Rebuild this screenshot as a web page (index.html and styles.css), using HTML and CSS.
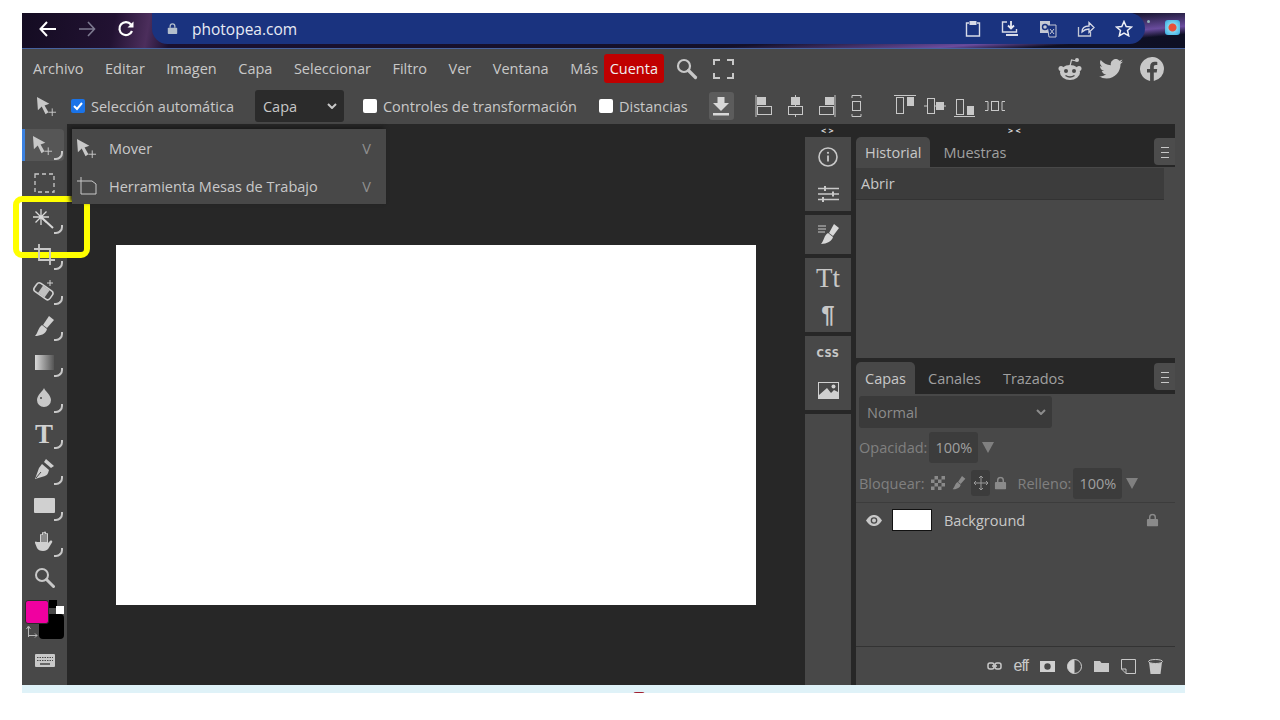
FILE: index.html
```html
<!DOCTYPE html>
<html lang="es">
<head>
    <meta charset="UTF-8">
    <title>Photopea</title>
    <link rel="stylesheet" href="styles.css">
</head>
<body>
<svg class="defs" width="0" height="0">
    <symbol id="i-move" viewBox="0 0 22 22"><path d="M1 1l13 7-5 2 4 7-3 2-4-8-4 4z" fill="currentColor"/><path d="M13 17h8M17 13v8" stroke="currentColor" fill="none"/></symbol>
    <symbol id="i-lock" viewBox="0 0 14 14"><rect x="1" y="6" width="12" height="8" rx="1" fill="currentColor"/><path d="M4 6V4a3 3 0 0 1 6 0v2" stroke="currentColor" stroke-width="1.6" fill="none"/></symbol>
    <symbol id="i-tri" viewBox="0 0 12 12"><path d="M0 1h12L6 12z" fill="currentColor"/></symbol>
    <symbol id="i-chev" viewBox="0 0 10 6"><path d="M1 1l4 4 4-4" stroke="currentColor" stroke-width="2" fill="none"/></symbol>
</svg>

<div class="window">
    <!-- barra del navegador -->
    <div class="browser">
        <div class="nav">
            <svg class="nav-back" width="18" height="16" viewBox="0 0 18 16"><path d="M17 8H2M8 1L1.500 8 8 15" stroke="#fff" stroke-width="2" fill="none"/></svg>
            <svg class="nav-fwd" width="18" height="16" viewBox="0 0 18 16"><path d="M1 8h15M10 1l6.500 7-6.500 7" stroke="#7d7a90" stroke-width="1.600" fill="none"/></svg>
            <svg class="nav-reload" width="18" height="18" viewBox="0 0 18 18"><path d="M15 11a6.500 6.500 0 1 1-1-6.500" stroke="#fff" stroke-width="2.200" fill="none"/><path d="M16.500 1.500v6h-6z" fill="#fff"/></svg>
        </div>
        <div class="omnibox">
            <svg class="lock" width="11" height="13" viewBox="0 0 14 14"><use href="#i-lock"/></svg>
            <span class="url">photopea.com</span>
            <div class="omni-icons">
                <svg width="16" height="17" viewBox="0 0 16 17"><path d="M4 3H1.500v13h13V3H12" stroke="#d8dbe8" stroke-width="1.400" fill="none"/><rect x="4.500" y="1" width="7" height="4" fill="#d8dbe8"/></svg>
                <svg width="18" height="18" viewBox="0 0 18 18"><path d="M6 2H1.500v10h14V9" stroke="#d8dbe8" stroke-width="1.400" fill="none"/><path d="M10 1v7M7 5.500L10 8.500l3-3" stroke="#e8eaf2" stroke-width="1.800" fill="none"/><path d="M5 14h12v2H5z" fill="#d8dbe8"/></svg>
                <svg width="18" height="18" viewBox="0 0 18 18"><rect x="1" y="1" width="10" height="12" fill="#c4c8d4"/><path d="M8 5h9v12H10z" fill="#1a337f" stroke="#c4c8d4"/><circle cx="6" cy="7" r="2.500" fill="none" stroke="#1a337f" stroke-width="1.400"/><path d="M11 9l4 5M15 9l-4 5" stroke="#c4c8d4"/></svg>
                <svg width="18" height="17" viewBox="0 0 18 17"><path d="M1.500 7v9h12v-4" stroke="#c4c8d4" stroke-width="1.300" fill="none"/><path d="M5 12c0-4 3-6 7-6V2.500l5 5-5 5V9c-3 0-5 1-7 3z" stroke="#d8dbe8" stroke-width="1.300" fill="none"/></svg>
                <svg width="18" height="17" viewBox="0 0 18 17"><path d="M9 1.500l2.200 5 5.300.5-4 3.500 1.200 5.300L9 13l-4.700 2.800 1.200-5.300-4-3.500 5.300-.5z" stroke="#eef0f6" stroke-width="1.500" fill="none"/></svg>
            </div>
        </div>
        <div class="ext">
            <span class="ext-dot"></span>
            <span class="ext-rec"></span>
        </div>
    </div>

    <!-- menu -->
    <div class="menubar">
        <a class="menu">Archivo</a>
        <a class="menu">Editar</a>
        <a class="menu">Imagen</a>
        <a class="menu">Capa</a>
        <a class="menu">Seleccionar</a>
        <a class="menu">Filtro</a>
        <a class="menu">Ver</a>
        <a class="menu">Ventana</a>
        <a class="menu">Más</a>
        <a class="menu account">Cuenta</a>
        <svg class="menu-search" width="22" height="22" viewBox="0 0 22 22"><circle cx="8" cy="8" r="6" stroke="#c8c8c8" stroke-width="2.200" fill="none"/><path d="M12.500 12.500l7 7" stroke="#c8c8c8" stroke-width="3.200" stroke-linecap="round"/></svg>
        <svg class="menu-full" width="21" height="20" viewBox="0 0 21 20"><path d="M1 6V1h6M14 1h6v5M20 14v5h-6M7 19H1v-5" stroke="#c8c8c8" stroke-width="2" fill="none"/></svg>
        <div class="social">
            <svg width="24" height="24" viewBox="0 0 24 24"><ellipse cx="12" cy="15.500" rx="10" ry="7.500" fill="#c8c8c8"/><circle cx="3" cy="11.500" r="2.500" fill="#c8c8c8"/><circle cx="21" cy="11.500" r="2.500" fill="#c8c8c8"/><circle cx="19" cy="3" r="2" fill="#c8c8c8"/><path d="M12 9l1.500-6 5 1" stroke="#c8c8c8" stroke-width="1.200" fill="none"/><circle cx="8" cy="14" r="2" fill="#484848"/><circle cx="16" cy="14" r="2" fill="#484848"/><path d="M7.500 18.500c3 2 6 2 9 0" stroke="#484848" stroke-width="1.300" fill="none"/></svg>
            <svg width="24" height="20" viewBox="0 0 24 20"><path d="M24 2.400c-.9.400-1.800.7-2.800.8 1-.6 1.800-1.600 2.200-2.700-1 .6-2 1-3.100 1.200A4.900 4.900 0 0 0 11.900 6.200C7.800 6 4.200 4 1.700.9c-1.300 2.200-.7 5.100 1.500 6.600-.8 0-1.600-.2-2.200-.6 0 2.400 1.700 4.400 3.900 4.900-.7.200-1.500.2-2.200.1.600 2 2.400 3.400 4.600 3.400A9.900 9.900 0 0 1 0 17.300 14 14 0 0 0 7.500 19.500c9.100 0 14.300-7.700 14-14.600 1-.7 1.800-1.500 2.500-2.500z" fill="#c8c8c8"/></svg>
            <svg width="24" height="24" viewBox="0 0 24 24"><path d="M24 12a12 12 0 1 0-13.900 11.900v-8.400H7V12h3.100V9.400c0-3 1.800-4.700 4.500-4.700 1.300 0 2.700.2 2.700.2v3h-1.500c-1.500 0-2 .9-2 1.900V12h3.400l-.5 3.500h-2.900v8.400A12 12 0 0 0 24 12z" fill="#c8c8c8"/></svg>
        </div>
    </div>

    <!-- opciones de la herramienta -->
    <div class="options">
        <svg class="opt-move" width="21" height="21"><use href="#i-move"/></svg>
        <span class="check checked"><svg width="14" height="14" viewBox="0 0 14 14"><path d="M3 7l3 3 5-6" stroke="#fff" stroke-width="2" fill="none"/></svg></span>
        <span class="opt-label">Selección automática</span>
        <div class="opt-select">Capa <svg width="10" height="6"><use href="#i-chev"/></svg></div>
        <span class="check check-a"></span>
        <span class="opt-label">Controles de transformación</span>
        <span class="check check-b"></span>
        <span class="opt-label">Distancias</span>
        <div class="opt-download"><svg width="18" height="20" viewBox="0 0 18 20"><path d="M5.500 1h7v6H17l-8 8-8-8h4.500z" fill="#d8d8d8"/><rect x="1" y="17" width="16" height="2.500" fill="#d8d8d8"/></svg></div>
        <svg class="align a1" width="17" height="24" viewBox="0 0 17 24"><path d="M1 1v22" stroke="#c8c8c8"/><rect x="2" y="3" width="9" height="8" fill="#c8c8c8"/><rect x="2.500" y="12.500" width="14" height="8" stroke="#c8c8c8" fill="none"/></svg>
        <svg class="align a2" width="17" height="24" viewBox="0 0 17 24"><path d="M8.500 1v3M8.500 11v2M8.500 20v3" stroke="#c8c8c8"/><rect x="4" y="3" width="9" height="8" fill="#c8c8c8"/><rect x="1.500" y="12.500" width="14" height="8" stroke="#c8c8c8" fill="none"/></svg>
        <svg class="align a3" width="17" height="24" viewBox="0 0 17 24"><path d="M16 1v22" stroke="#c8c8c8"/><rect x="6" y="3" width="9" height="8" fill="#c8c8c8"/><rect x=".5" y="12.500" width="14" height="8" stroke="#c8c8c8" fill="none"/></svg>
        <svg class="align a4" width="11" height="24" viewBox="0 0 11 24"><path d="M1 4V1.500h9V4M1 20v2.500h9V20" stroke="#c8c8c8" fill="none"/><rect x="1.500" y="7.500" width="8" height="9" stroke="#c8c8c8" fill="none"/></svg>
        <svg class="align a5" width="22" height="24" viewBox="0 0 22 24"><path d="M0 1.500h22" stroke="#c8c8c8"/><rect x="2.500" y="3.500" width="7" height="16" stroke="#c8c8c8" fill="none"/><rect x="13" y="3" width="7" height="9" fill="#c8c8c8"/></svg>
        <svg class="align a6" width="22" height="24" viewBox="0 0 22 24"><path d="M0 12h3M10 12h2M20 12h2" stroke="#c8c8c8"/><rect x="3.500" y="4.500" width="7" height="15" stroke="#c8c8c8" fill="none"/><rect x="12" y="8" width="8" height="8" fill="#c8c8c8"/></svg>
        <svg class="align a7" width="21" height="24" viewBox="0 0 21 24"><path d="M0 22.500h21" stroke="#c8c8c8"/><rect x="2.500" y="5.500" width="7" height="15" stroke="#c8c8c8" fill="none"/><rect x="13" y="12" width="7" height="9" fill="#c8c8c8"/></svg>
        <svg class="align a8" width="22" height="12" viewBox="0 0 22 12"><path d="M1 1.500h3v9H1M21 1.500h-3v9h3" stroke="#c8c8c8" fill="none"/><rect x="7.500" y="1.500" width="7" height="9" stroke="#c8c8c8" fill="none"/></svg>
    </div>

    <div class="workspace">
        <!-- herramientas -->
        <div class="tools">
            <div class="tool active more"><svg width="21" height="21"><use href="#i-move"/></svg></div>
            <div class="tool"><svg width="21" height="20" viewBox="0 0 21 20"><rect x="1" y="1" width="19" height="18" stroke="#c8c8c8" stroke-width="1.300" stroke-dasharray="4 3" fill="none"/></svg></div>
            <div class="tool more picked"><svg width="22" height="22" viewBox="0 0 22 22"><path d="M8 9l12 11" stroke="#d8d8d8" stroke-width="2"/><path d="M8 1v16M0 9h16M2.500 3.500l11 11M13.500 3.500l-11 11" stroke="#d8d8d8" stroke-width="1.300"/></svg></div>
            <div class="tool more"><svg width="21" height="21" viewBox="0 0 21 21"><path d="M5 0v16h16M0 5h16v16" stroke="#c8c8c8" stroke-width="1.800" fill="none"/></svg></div>
            <div class="tool more"><svg width="22" height="22" viewBox="0 0 22 22"><rect x="1" y="6" width="19" height="10" rx="3" transform="rotate(35 10 11)" stroke="#d0d0d0" stroke-width="1.600" fill="none"/><rect x="7" y="6.500" width="8" height="9" transform="rotate(35 10 11)" fill="#c0c0c0"/><path d="M17 0v6M14 3h6" stroke="#d0d0d0"/></svg></div>
            <div class="tool more"><svg width="19" height="21" viewBox="0 0 19 21"><path d="M14 0l5 4-7 8-4-3z" fill="#d0d0d0"/><path d="M7 9l5 4c-1 5-7 7-12 7 3-3 3-8 7-11z" fill="#d0d0d0"/></svg></div>
            <div class="tool more"><span class="grad"></span></div>
            <div class="tool more"><svg width="16" height="20" viewBox="0 0 16 20"><path d="M8 0c1 3 7 7 7 12a7 7 0 0 1-14 0C1 7 7 3 8 0z" fill="#c8c8c8"/><circle cx="5" cy="10" r="1" fill="#484848"/></svg></div>
            <div class="tool more"><span class="tool-t">T</span></div>
            <div class="tool more"><svg width="20" height="21" viewBox="0 0 20 21"><path d="M12 0l8 7-3 2-7-6z" fill="#d0d0d0"/><path d="M8 5l7 6c-1 4-2 5-4 6l-10 3 4-11z" fill="#d0d0d0"/><path d="M2 19l5-6" stroke="#484848"/></svg></div>
            <div class="tool more"><span class="rect"></span></div>
            <div class="tool more"><svg width="18" height="21" viewBox="0 0 18 21"><path d="M5 11V4a1 1 0 0 1 2 0V2a1 1 0 0 1 2 0v-.5a1 1 0 0 1 2 0V3a1 1 0 0 1 2 0v9l2-2c1-1 3 0 2 1.500l-3 5c-1 2-3 3.500-6 3.500-3 0-5-1-6-3l-2-5c-.5-1.500 1-2 2-1z" fill="#d0d0d0"/><path d="M7 4v7M9 2v9M11 3v8" stroke="#484848"/></svg></div>
            <div class="tool"><svg width="21" height="21" viewBox="0 0 21 21"><circle cx="8" cy="8" r="6" stroke="#c8c8c8" stroke-width="2" fill="none"/><path d="M12.500 12.500l7 7" stroke="#c8c8c8" stroke-width="3" stroke-linecap="round"/></svg></div>
            <div class="swatches">
                <span class="sw-reset-a"></span>
                <span class="sw-reset-b"></span>
                <span class="sw-bg"></span>
                <span class="sw-fg"></span>
                <svg class="sw-swap" width="12" height="13" viewBox="0 0 12 13"><path d="M2.500 12V2M.5 4l2-3 2 3M2.500 10.500H11M9 8.500l2 2-2 2" stroke="#b8b8b8" fill="none"/></svg>
            </div>
            <div class="keyboard"><svg width="20" height="13" viewBox="0 0 20 13"><rect width="20" height="13" rx="1" fill="#c8c8c8"/><path d="M2 3.500h16M2 6.500h16" stroke="#484848" stroke-dasharray="1.500 1"/><path d="M5 10h10" stroke="#484848" stroke-width="1.500"/></svg></div>
        </div>

        <!-- lienzo -->
        <div class="stage">
            <div class="canvas"></div>
            <div class="flyout">
                <div class="fly-row">
                    <svg width="21" height="21"><use href="#i-move"/></svg>
                    <span class="fly-name">Mover</span>
                    <span class="fly-key">V</span>
                </div>
                <div class="fly-row">
                    <svg width="21" height="18" viewBox="0 0 21 18"><path d="M5 0v4H1M5 4v13h15V7l-4-3z" stroke="#c8c8c8" fill="none"/></svg>
                    <span class="fly-name">Herramienta Mesas de Trabajo</span>
                    <span class="fly-key">V</span>
                </div>
            </div>
        </div>

        <!-- tira de iconos -->
        <div class="strip">
            <span class="grip grip-left">&lt; &gt;</span>
            <div class="strip-group g-tall">
                <svg width="20" height="20" viewBox="0 0 20 20"><circle cx="10" cy="10" r="9" stroke="#c8c8c8" stroke-width="1.600" fill="none"/><path d="M10 8.500v6" stroke="#c8c8c8" stroke-width="1.800"/><circle cx="10" cy="5.800" r="1.100" fill="#c8c8c8"/></svg>
                <svg width="21" height="16" viewBox="0 0 21 16"><path d="M0 2.500h21M0 8h21M0 13.500h21" stroke="#c8c8c8" stroke-width="1.500"/><path d="M7 0v5M15 5.500v5M5 11v5" stroke="#c8c8c8" stroke-width="2"/></svg>
            </div>
            <div class="strip-group g-short">
                <svg width="21" height="21" viewBox="0 0 21 21"><path d="M0 2h8M0 5h8M0 8h7" stroke="#c8c8c8"/><path d="M16 0l5 4-6 8-4-3z" fill="#d8d8d8"/><path d="M10 9l5 4c-1 4-6 7-12 7 3-3 3-9 7-11z" fill="#d8d8d8"/></svg>
            </div>
            <div class="strip-group g-tall">
                <span class="glyph-tt">Tt</span>
                <span class="glyph-pil">¶</span>
            </div>
            <div class="strip-group g-tall">
                <span class="glyph-css">CSS</span>
                <svg width="21" height="17" viewBox="0 0 21 17"><rect width="21" height="17" fill="#d0d0d0"/><circle cx="15" cy="5" r="2" fill="#484848"/><path d="M1 16l5-7 4 4 2-2 3 3 5 1v-2 3z" fill="#484848" opacity="0"/><path d="M1 1h19v9l-4-2-3 3-4-5-8 7z" fill="#484848"/><circle cx="15.500" cy="4.500" r="2" fill="#d0d0d0"/></svg>
            </div>
            <div class="strip-group g-fill"></div>
        </div>

        <!-- paneles -->
        <div class="panels">
            <span class="grip grip-right">&gt; &lt;</span>
            <div class="panel panel-top">
                <div class="tabs">
                    <span class="tab on">Historial</span>
                    <span class="tab">Muestras</span>
                    <span class="tab-menu"></span>
                </div>
                <div class="history-row">Abrir</div>
            </div>
            <div class="panel panel-layers">
                <div class="tabs tabs-b">
                    <span class="tab on">Capas</span>
                    <span class="tab">Canales</span>
                    <span class="tab">Trazados</span>
                    <span class="tab-menu"></span>
                </div>
                <div class="blend">Normal <svg width="10" height="6"><use href="#i-chev"/></svg></div>
                <div class="layer-opt opt-opacity">
                    <span>Opacidad:</span><span class="pct">100%</span>
                    <svg width="12" height="12"><use href="#i-tri"/></svg>
                </div>
                <div class="layer-opt opt-lock">
                    <span>Bloquear:</span>
                    <svg class="lk" width="14" height="14" viewBox="0 0 14 14"><rect width="14" height="14" fill="#8a8a8a"/><path d="M0 0h3.500v3.500H0zM7 0h3.500v3.500H7zM3.500 3.500H7V7H3.500zM10.500 3.500H14V7h-3.500zM0 7h3.500v3.500H0zM7 7h3.500v3.500H7zM3.500 10.500H7V14H3.500zM10.500 10.500H14V14h-3.500z" fill="#484848"/></svg>
                    <svg class="lk" width="14" height="14" viewBox="0 0 19 21"><path d="M14 0l5 4-7 8-4-3z" fill="#8a8a8a"/><path d="M7 9l5 4c-1 5-7 7-12 7 3-3 3-8 7-11z" fill="#8a8a8a"/></svg>
                    <span class="lk-move"><svg width="14" height="14" viewBox="0 0 14 14"><path d="M7 0v14M0 7h14M5 2l2-2 2 2M5 12l2 2 2-2M2 5L0 7l2 2M12 5l2 2-2 2" stroke="#9a9a9a" fill="none"/></svg></span>
                    <svg class="lk lk-pad" width="13" height="14" style="color:#8a8a8a" viewBox="0 0 14 14"><use href="#i-lock"/></svg>
                    <span class="fill-label">Relleno:</span><span class="pct">100%</span>
                    <svg width="12" height="12"><use href="#i-tri"/></svg>
                </div>
                <div class="layer-row">
                    <svg width="16" height="11" viewBox="0 0 16 11"><path d="M0 5.500C3 1 5.500 0 8 0s5 1 8 5.500C13 10 10.500 11 8 11S3 10 0 5.500z" fill="#c8c8c8"/><circle cx="8" cy="5.500" r="3.300" fill="#484848"/><circle cx="8" cy="5.500" r="2" fill="#c8c8c8"/></svg>
                    <span class="thumb"></span>
                    <span class="layer-name">Background</span>
                    <svg class="layer-lock" width="13" height="14" viewBox="0 0 14 14"><use href="#i-lock"/></svg>
                </div>
                <div class="layers-foot">
                    <svg width="15" height="8" viewBox="0 0 15 8"><rect x="1" y="1" width="6" height="6" rx="2" stroke="#c8c8c8" stroke-width="1.500" fill="none"/><rect x="8" y="1" width="6" height="6" rx="2" stroke="#c8c8c8" stroke-width="1.500" fill="none"/><path d="M5 4h5" stroke="#c8c8c8" stroke-width="1.500"/></svg>
                    <span class="foot-eff">eff</span>
                    <svg width="15" height="11" viewBox="0 0 15 11"><rect width="15" height="11" fill="#d0d0d0"/><circle cx="7.500" cy="5.500" r="3.200" fill="#484848"/></svg>
                    <svg width="15" height="15" viewBox="0 0 15 15"><circle cx="7.500" cy="7.500" r="7" fill="#484848" stroke="#d0d0d0"/><path d="M7.500.5a7 7 0 0 0 0 14z" fill="#d0d0d0"/></svg>
                    <svg width="15" height="11" viewBox="0 0 15 11"><path d="M0 0h6l1.500 2H15v9H0z" fill="#c8c8c8"/></svg>
                    <svg width="15" height="15" viewBox="0 0 15 15"><path d="M.5.5h14v14H5L.5 10zM.5 10H5v4.500" stroke="#c8c8c8" fill="none"/></svg>
                    <svg width="15" height="15" viewBox="0 0 15 15"><path d="M1 3l1.500 12h10L14 3z" fill="#c8c8c8"/><ellipse cx="7.500" cy="2.500" rx="7" ry="2" stroke="#c8c8c8" fill="#484848"/></svg>
                </div>
            </div>
        </div>
    </div>
    <div class="taskbar"><span class="task-dot"></span></div>
</div>
</body>
</html>
```

FILE: styles.css
```css
* {
    box-sizing: border-box;
}

body {
    margin: 0;
    background: #fff;
    font-family: "Open Sans", "Liberation Sans", sans-serif;
    font-size: 14.5px;
    color: #c8c8c8;
}

.defs {
    display: block;
    height: 0;
}

svg {
    display: block;
    flex: none;
}

.window {
    width: 1163px;
    margin: 13px 0 0 22px;
}

/* navegador */
.browser {
    height: 36px;
    display: flex;
    border-bottom: 1px solid #47639f;
    background:
        linear-gradient(175deg, transparent 0 70%, #6a4c9e 84%, transparent 90%),
        linear-gradient(100deg, #140c22 0, #221232 8%, #4c2e5c 11%, #1a1030 13%, #0e1024 100%);
}

.nav {
    width: 130px;
    display: flex;
    align-items: center;
    padding-bottom: 3px;
}

.nav-back {
    margin-left: 17px;
}

.nav-fwd {
    margin-left: 21px;
}

.nav-reload {
    margin-left: 21px;
}

.omnibox {
    width: 993px;
    height: 31px;
    background: #1a337f;
    border-radius: 0 16px 16px 16px;
    display: flex;
    align-items: center;
    padding-left: 15px;
    color: #a8b4c8;
}

.lock {
    color: #b4bfcc;
}

.url {
    margin-left: 14px;
    font-size: 15.5px;
    color: #e8ebf4;
}

.omni-icons {
    margin-left: auto;
    margin-right: 12px;
    display: flex;
    gap: 20px;
    align-items: center;
}

.ext {
    flex: 1;
    position: relative;
}

.ext-dot {
    position: absolute;
    left: 2px;
    top: 7px;
    width: 3px;
    height: 3px;
    background: #8fb0b8;
    border-radius: 50%;
}

.ext-rec {
    position: absolute;
    left: 20px;
    top: 7px;
    width: 15px;
    height: 15px;
    border-radius: 3px;
    background: radial-gradient(circle, #e8503a 0 3.500px, #7fd4f0 4.500px, #2ea8e0 100%);
}

/* menu */
.menubar {
    height: 39px;
    background: #484848;
    display: flex;
    align-items: center;
    padding-left: 11px;
}

.menu {
    margin-right: 21.500px;
    white-space: nowrap;
}

.account {
    margin-left: -16px;
    margin-right: 0;
    padding: 0 6px;
    height: 29px;
    line-height: 29px;
    background: #c00000;
    color: #f0f0f0;
    border-radius: 3px;
}

.menu-search {
    margin-left: 12px;
}

.menu-full {
    margin-left: 15px;
}

.social {
    margin-left: auto;
    margin-right: 21px;
    display: flex;
    gap: 17px;
    align-items: center;
}

/* opciones */
.options {
    height: 36px;
    background: #484848;
    display: flex;
    align-items: center;
    position: relative;
}

.opt-move {
    margin-left: 14px;
}

.check {
    width: 14px;
    height: 14px;
    background: #fff;
    border-radius: 2px;
    margin-right: 6px;
}

.checked {
    background: #1a73e8;
    margin-left: 14px;
}

.check-a {
    margin-left: 19px;
}

.check-b {
    margin-left: 22px;
}

.opt-label {
    white-space: nowrap;
}

.opt-select {
    width: 89px;
    height: 32px;
    margin-left: 21px;
    padding: 0 7px 0 8px;
    background: #2b2b2b;
    border-radius: 3px;
    display: flex;
    align-items: center;
    justify-content: space-between;
    color: #c8c8c8;
}

.opt-download {
    width: 25px;
    height: 28px;
    margin-left: 21px;
    background: #5c5c5c;
    border-radius: 3px;
    display: flex;
    align-items: center;
    justify-content: center;
}

.a1 {
    margin-left: 21px;
}

.a2,
.a3 {
    margin-left: 15px;
}

.a4 {
    margin-left: 15px;
}

.a5 {
    margin-left: 32px;
}

.a6 {
    margin-left: 8px;
}

.a7 {
    margin-left: 8px;
}

.a8 {
    margin-left: 9px;
}

/* zona de trabajo */
.workspace {
    height: 561px;
    display: flex;
    background: #272727;
}

.tools {
    width: 45px;
    background: #484848;
    padding-top: 5px;
    flex: none;
}

.tool {
    height: 35.900px;
    display: flex;
    align-items: center;
    justify-content: center;
    position: relative;
    padding-right: 1px;
}

.tool.more::after {
    content: "";
    position: absolute;
    right: 4px;
    bottom: 3px;
    width: 7px;
    height: 7px;
    border-right: 2px solid #c8c8c8;
    border-bottom: 2px solid #c8c8c8;
    border-radius: 0 0 7px 0;
}

.active {
    width: 42px;
    height: 32px;
    margin-bottom: 3.900px;
    background: #565656;
    border-left: 3px solid #3c82e0;
    border-radius: 0 4px 4px 0;
    padding-right: 5px;
}

.active.more::after {
    right: 1px;
    bottom: 1px;
}

.picked::before {
    content: "";
    position: absolute;
    left: -9px;
    top: 2px;
    width: 65px;
    height: 50px;
    margin-top: -7px;
    border: 6px solid #ffff00;
    border-radius: 9px;
}

.grad {
    width: 19px;
    height: 15px;
    background: linear-gradient(90deg, #d8d8d8, #555);
}

.tool-t {
    font-family: "Liberation Serif", serif;
    font-weight: bold;
    font-size: 27px;
    line-height: 27px;
    color: #d0d0d0;
}

.rect {
    width: 21px;
    height: 15px;
    background: #d0d0d0;
    border-radius: 1px;
}

.swatches {
    position: relative;
    height: 45px;
    margin-top: 4px;
}

.sw-fg,
.sw-bg,
.sw-reset-a,
.sw-reset-b,
.sw-swap {
    position: absolute;
}

.sw-fg {
    left: 3px;
    top: 0;
    width: 24px;
    height: 24px;
    background: #f000a0;
    border: 1px solid #2a2a2a;
    border-radius: 3px;
}

.sw-bg {
    left: 17px;
    top: 14px;
    width: 25px;
    height: 25px;
    background: #000;
    border-radius: 4px;
}

.sw-reset-a {
    left: 27px;
    top: 0;
    width: 8px;
    height: 8px;
    background: #000;
}

.sw-reset-b {
    left: 34px;
    top: 6px;
    width: 8px;
    height: 8px;
    background: #fff;
}

.sw-swap {
    left: 4px;
    top: 25px;
}

.keyboard {
    display: flex;
    justify-content: center;
    padding-top: 9px;
}

.stage {
    width: 738px;
    padding: 121px 0 0 49px;
    position: relative;
    flex: none;
}

.canvas {
    width: 640px;
    height: 360px;
    background: #fff;
}

.flyout {
    position: absolute;
    left: 5px;
    top: 5px;
    width: 314px;
    height: 75px;
    background: #484848;
    box-shadow: -2px -2px 4px #1a1a1a;
}

.fly-row {
    height: 38px;
    display: flex;
    align-items: center;
    padding-left: 4px;
    color: #c8c8c8;
}

.fly-name {
    margin-left: 12px;
    white-space: nowrap;
}

.fly-key {
    margin-left: auto;
    margin-right: 15px;
    color: #909090;
}

/* tira de iconos */
.strip {
    width: 51px;
    padding-top: 13px;
    position: relative;
    flex: none;
}

.grip {
    position: absolute;
    top: 1px;
    font-size: 9px;
    font-weight: bold;
    line-height: 12px;
    color: #d8d8d8;
    white-space: nowrap;
}

.grip-left {
    left: 16px;
}

.grip-right {
    left: 152px;
}

.strip-group {
    width: 46px;
    background: #484848;
    margin-bottom: 4px;
    display: flex;
    flex-direction: column;
    align-items: center;
    justify-content: space-around;
}

.g-tall {
    height: 74px;
}

.g-short {
    height: 39px;
}

.g-fill {
    height: 271px;
    margin-bottom: 0;
}

.glyph-tt {
    font-family: "Liberation Serif", serif;
    font-size: 27px;
    line-height: 30px;
}

.glyph-pil {
    font-family: "Liberation Sans", sans-serif;
    font-weight: bold;
    font-size: 24px;
    line-height: 26px;
}

.glyph-css {
    font-family: "DejaVu Sans", sans-serif;
    font-weight: bold;
    font-size: 10px;
    letter-spacing: .5px;
}

/* paneles */
.panels {
    width: 329px;
    padding-top: 13px;
    position: relative;
    flex: none;
    background: linear-gradient(90deg, #272727 319px, #484848 319px);
}

.panel {
    width: 319px;
    background: #484848;
}

.panel-top {
    height: 221px;
    margin-bottom: 4px;
}

.panel-layers {
    height: 323px;
    position: relative;
}

.tabs {
    height: 30px;
    background: #272727;
    display: flex;
    align-items: center;
    position: relative;
}

.tabs-b {
    height: 32px;
}

.tab {
    height: 100%;
    padding: 0 9px;
    margin-right: 4px;
    display: flex;
    align-items: center;
    color: #a0a0a0;
    border-radius: 5px 5px 0 0;
}

.tab.on {
    background: #484848;
    color: #c8c8c8;
}

.tab-menu {
    position: absolute;
    right: 0;
    top: 1px;
    width: 21px;
    height: 27px;
    background: #4c4c4c;
    border-radius: 4px 0 0 4px;
}

.tab-menu::after {
    content: "";
    position: absolute;
    left: 7px;
    top: 9px;
    width: 8px;
    height: 9px;
    border-top: 1px solid #c8c8c8;
    border-bottom: 1px solid #c8c8c8;
    background: linear-gradient(#c8c8c8, #c8c8c8) center / 100% 1px no-repeat;
}

.history-row {
    width: 308px;
    height: 32px;
    margin-top: 1px;
    padding-left: 5px;
    line-height: 31px;
    background: #3c3c3c;
    border-bottom: 1px solid #333;
}

.blend {
    width: 193px;
    height: 32px;
    margin: 2px 0 0 3px;
    padding: 0 6px 0 8px;
    background: #3a3a3a;
    border-radius: 3px;
    display: flex;
    align-items: center;
    justify-content: space-between;
    color: #8c8c8c;
}

.layer-opt {
    display: flex;
    align-items: center;
    height: 32px;
    padding-left: 3px;
    color: #808080;
    white-space: nowrap;
}

.opt-opacity {
    margin-top: 3px;
}

.opt-lock {
    margin-top: 4px;
    height: 32px;
}

.pct {
    height: 31px;
    padding: 0 6px;
    margin: 0 4px 0 2px;
    line-height: 31px;
    background: #3c3c3c;
    border-radius: 3px;
    color: #a0a0a0;
}

.lk {
    margin-left: 7px;
}

.opt-lock > span:first-child {
    margin-right: 0;
}

.lk-move {
    margin-left: 5px;
    width: 19px;
    height: 26px;
    background: #3c3c3c;
    border-radius: 3px;
    display: flex;
    align-items: center;
    justify-content: center;
}

.lk-pad {
    margin-left: 4px;
}

.fill-label {
    margin-left: 10px;
}

.layer-row {
    margin-top: 3px;
    height: 35px;
    border-top: 1px solid #3c3c3c;
    display: flex;
    align-items: center;
    padding: 0 16px 0 10px;
}

.thumb {
    width: 40px;
    height: 22px;
    margin-left: 10px;
    background: #fff;
    border: 1px solid #111;
}

.layer-name {
    margin-left: 12px;
}

.layer-lock {
    margin-left: auto;
    color: #8a8a8a;
}

.layers-foot {
    position: absolute;
    left: 0;
    right: 0;
    top: 284px;
    height: 39px;
    border-top: 1px solid #333;
    display: flex;
    align-items: center;
    justify-content: flex-end;
    gap: 12px;
    padding-right: 12px;
}

.foot-eff {
    font-family: "Liberation Sans", sans-serif;
    font-size: 16px;
    letter-spacing: -1px;
}

.taskbar {
    height: 8px;
    background: #dff2f8;
    position: relative;
}

.task-dot {
    position: absolute;
    left: 611px;
    top: 7px;
    width: 12px;
    height: 3px;
    border-radius: 6px 6px 0 0;
    background: #a02030;
}
```
